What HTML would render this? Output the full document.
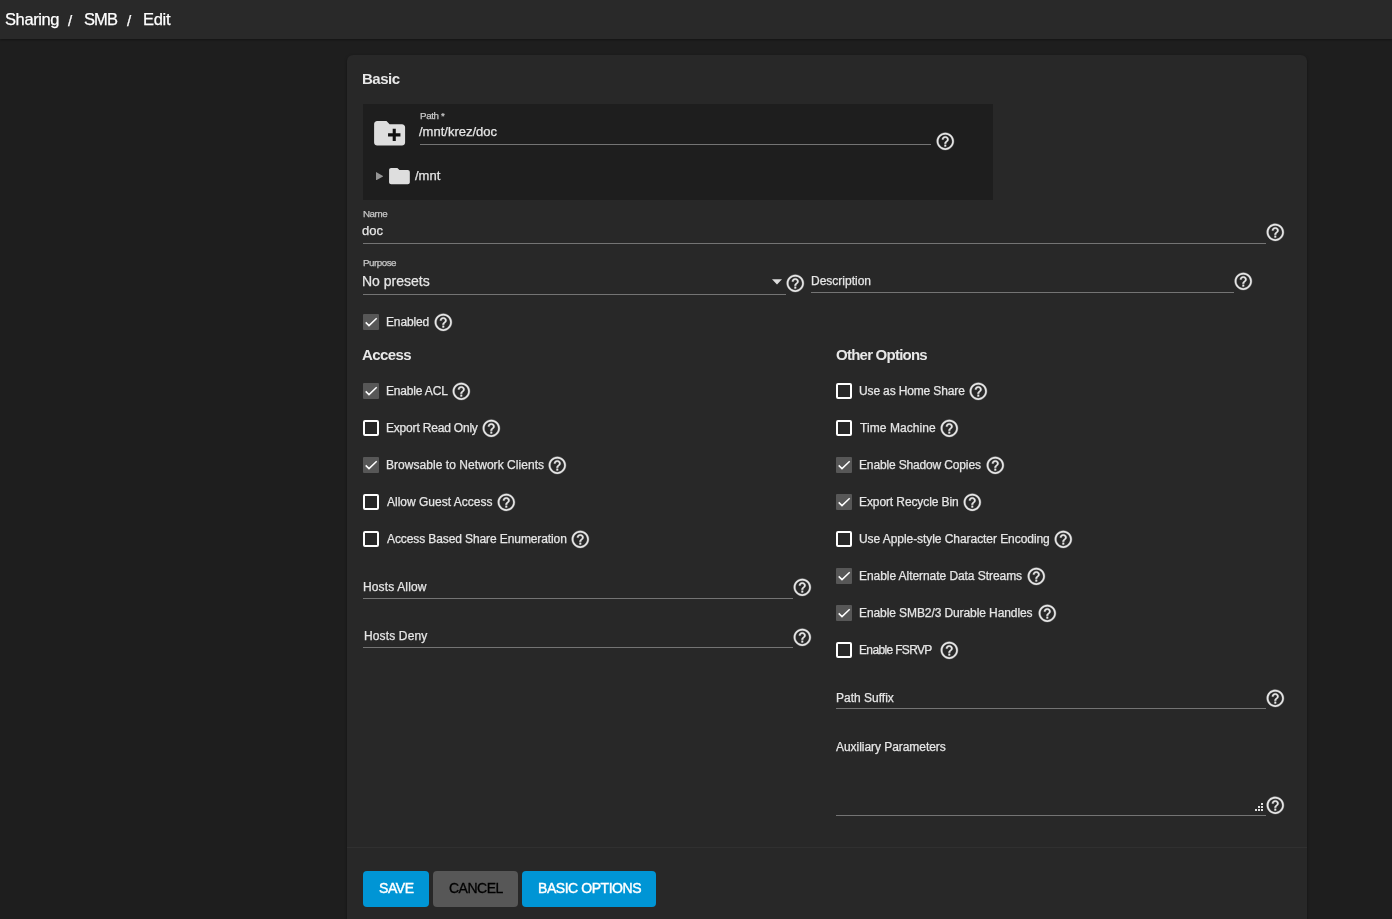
<!DOCTYPE html>
<html><head><meta charset="utf-8"><style>
html,body{margin:0;padding:0;}
body{width:1392px;height:919px;overflow:hidden;background:#1e1e1e;position:relative;font-family:"Liberation Sans", sans-serif;}
.t{position:absolute;white-space:nowrap;will-change:transform;-webkit-text-stroke:0.25px currentColor;}
.ln{position:absolute;height:1px;background:#747474;}
.cb{position:absolute;width:16px;height:16px;box-sizing:border-box;border-radius:2px;}
.cb.on{border-radius:1px;}
.cb.off{border:2px solid #ffffff;}
.cb.on{background:#575757;}
.cb svg{position:absolute;left:0;top:0;}
.hp{position:absolute;width:20.6px;height:20.6px;}
.btn{position:absolute;top:871px;height:36px;border-radius:4px;}
</style></head><body>

<div style="position:absolute;left:0;top:0;width:1392px;height:39px;background:#292929;box-shadow:0 1px 2px rgba(0,0,0,0.35);"></div>
<div style="position:absolute;left:347px;top:55px;width:960px;height:900px;background:#282828;border-radius:6px;box-shadow:0 1px 3px rgba(0,0,0,0.4);"></div>
<div style="position:absolute;left:363px;top:104px;width:630px;height:96px;background:#1e1e1e;"></div>
<div style="position:absolute;left:347px;top:847px;width:960px;height:1px;background:#303030;"></div>
<div class="btn" style="left:363px;width:66px;background:#0095d5;"></div>
<div class="btn" style="left:433px;width:85px;background:#575757;"></div>
<div class="btn" style="left:522px;width:134px;background:#0095d5;"></div>
<div class="ln" style="left:420px;top:144px;width:511px;"></div>
<div class="ln" style="left:363px;top:243px;width:903px;"></div>
<div class="ln" style="left:363px;top:294px;width:423px;"></div>
<div class="ln" style="left:811px;top:292px;width:423px;"></div>
<div class="ln" style="left:363px;top:598px;width:430px;"></div>
<div class="ln" style="left:363px;top:647px;width:430px;"></div>
<div class="ln" style="left:836px;top:708px;width:430px;"></div>
<div class="ln" style="left:836px;top:815px;width:430px;"></div>
<svg style="position:absolute;left:371px;top:114.7px;" width="37.2" height="36.7" viewBox="0 0 24 24" preserveAspectRatio="none"><path d="M20 6h-8l-2-2H4c-1.11 0-1.99.89-1.99 2L2 18c0 1.11.89 2 2 2h16c1.11 0 2-.89 2-2V8c0-1.11-.89-2-2-2z" fill="#dedede"/><path d="M19 14h-3v3h-2v-3h-3v-2h3V9h2v3h3v2z" fill="#111111"/></svg>
<svg style="position:absolute;left:375.8px;top:171.8px;" width="7.4" height="8.4" viewBox="0 0 7.4 8.4"><path d="M0 0 L7.4 4.2 L0 8.4 Z" fill="#959595"/></svg>
<svg style="position:absolute;left:387.1px;top:163.7px;" width="24.9" height="24.4" viewBox="0 0 24 24" preserveAspectRatio="none"><path d="M10 4H4c-1.1 0-1.99.9-1.99 2L2 18c0 1.1.9 2 2 2h16c1.1 0 2-.9 2-2V8c0-1.1-.9-2-2-2h-8l-2-2z" fill="#dedede"/></svg>
<svg style="position:absolute;left:771px;top:278.5px;" width="12" height="6" viewBox="0 0 12 6"><path d="M1 0.3 L11 0.3 L6 5.5 Z" fill="#dddddd"/></svg>
<svg style="position:absolute;left:1255px;top:803px;" width="10" height="9"><rect x="6" y="0" width="2" height="2" fill="#e0e0e0"/><rect x="3" y="3" width="2" height="2" fill="#e0e0e0"/><rect x="6" y="3" width="2" height="2" fill="#e0e0e0"/><rect x="0" y="6" width="2" height="2" fill="#e0e0e0"/><rect x="3" y="6" width="2" height="2" fill="#e0e0e0"/><rect x="6" y="6" width="2" height="2" fill="#e0e0e0"/></svg>
<svg class="hp" style="left:934.80px;top:130.55px;" viewBox="0 0 24 24"><path d="M11 18h2v-2h-2v2zm1-16C6.48 2 2 6.48 2 12s4.48 10 10 10 10-4.48 10-10S17.52 2 12 2zm0 18c-4.41 0-8-3.59-8-8s3.59-8 8-8 8 3.59 8 8-3.59 8-8 8zm0-14c-2.21 0-4 1.79-4 4h2c0-1.1.9-2 2-2s2 .9 2 2c0 2-3 1.75-3 5h2c0-2.25 3-2.5 3-5 0-2.21-1.79-4-4-4z" fill="#e6e6e6" stroke="#e6e6e6" stroke-width="0.35"/></svg>
<svg class="hp" style="left:1265.40px;top:221.55px;" viewBox="0 0 24 24"><path d="M11 18h2v-2h-2v2zm1-16C6.48 2 2 6.48 2 12s4.48 10 10 10 10-4.48 10-10S17.52 2 12 2zm0 18c-4.41 0-8-3.59-8-8s3.59-8 8-8 8 3.59 8 8-3.59 8-8 8zm0-14c-2.21 0-4 1.79-4 4h2c0-1.1.9-2 2-2s2 .9 2 2c0 2-3 1.75-3 5h2c0-2.25 3-2.5 3-5 0-2.21-1.79-4-4-4z" fill="#e6e6e6" stroke="#e6e6e6" stroke-width="0.35"/></svg>
<svg class="hp" style="left:785.30px;top:272.55px;" viewBox="0 0 24 24"><path d="M11 18h2v-2h-2v2zm1-16C6.48 2 2 6.48 2 12s4.48 10 10 10 10-4.48 10-10S17.52 2 12 2zm0 18c-4.41 0-8-3.59-8-8s3.59-8 8-8 8 3.59 8 8-3.59 8-8 8zm0-14c-2.21 0-4 1.79-4 4h2c0-1.1.9-2 2-2s2 .9 2 2c0 2-3 1.75-3 5h2c0-2.25 3-2.5 3-5 0-2.21-1.79-4-4-4z" fill="#e6e6e6" stroke="#e6e6e6" stroke-width="0.35"/></svg>
<svg class="hp" style="left:1233.30px;top:270.55px;" viewBox="0 0 24 24"><path d="M11 18h2v-2h-2v2zm1-16C6.48 2 2 6.48 2 12s4.48 10 10 10 10-4.48 10-10S17.52 2 12 2zm0 18c-4.41 0-8-3.59-8-8s3.59-8 8-8 8 3.59 8 8-3.59 8-8 8zm0-14c-2.21 0-4 1.79-4 4h2c0-1.1.9-2 2-2s2 .9 2 2c0 2-3 1.75-3 5h2c0-2.25 3-2.5 3-5 0-2.21-1.79-4-4-4z" fill="#e6e6e6" stroke="#e6e6e6" stroke-width="0.35"/></svg>
<svg class="hp" style="left:433.20px;top:311.55px;" viewBox="0 0 24 24"><path d="M11 18h2v-2h-2v2zm1-16C6.48 2 2 6.48 2 12s4.48 10 10 10 10-4.48 10-10S17.52 2 12 2zm0 18c-4.41 0-8-3.59-8-8s3.59-8 8-8 8 3.59 8 8-3.59 8-8 8zm0-14c-2.21 0-4 1.79-4 4h2c0-1.1.9-2 2-2s2 .9 2 2c0 2-3 1.75-3 5h2c0-2.25 3-2.5 3-5 0-2.21-1.79-4-4-4z" fill="#e6e6e6" stroke="#e6e6e6" stroke-width="0.35"/></svg>
<svg class="hp" style="left:792.20px;top:576.75px;" viewBox="0 0 24 24"><path d="M11 18h2v-2h-2v2zm1-16C6.48 2 2 6.48 2 12s4.48 10 10 10 10-4.48 10-10S17.52 2 12 2zm0 18c-4.41 0-8-3.59-8-8s3.59-8 8-8 8 3.59 8 8-3.59 8-8 8zm0-14c-2.21 0-4 1.79-4 4h2c0-1.1.9-2 2-2s2 .9 2 2c0 2-3 1.75-3 5h2c0-2.25 3-2.5 3-5 0-2.21-1.79-4-4-4z" fill="#e6e6e6" stroke="#e6e6e6" stroke-width="0.35"/></svg>
<svg class="hp" style="left:792.20px;top:626.55px;" viewBox="0 0 24 24"><path d="M11 18h2v-2h-2v2zm1-16C6.48 2 2 6.48 2 12s4.48 10 10 10 10-4.48 10-10S17.52 2 12 2zm0 18c-4.41 0-8-3.59-8-8s3.59-8 8-8 8 3.59 8 8-3.59 8-8 8zm0-14c-2.21 0-4 1.79-4 4h2c0-1.1.9-2 2-2s2 .9 2 2c0 2-3 1.75-3 5h2c0-2.25 3-2.5 3-5 0-2.21-1.79-4-4-4z" fill="#e6e6e6" stroke="#e6e6e6" stroke-width="0.35"/></svg>
<svg class="hp" style="left:1265.40px;top:687.55px;" viewBox="0 0 24 24"><path d="M11 18h2v-2h-2v2zm1-16C6.48 2 2 6.48 2 12s4.48 10 10 10 10-4.48 10-10S17.52 2 12 2zm0 18c-4.41 0-8-3.59-8-8s3.59-8 8-8 8 3.59 8 8-3.59 8-8 8zm0-14c-2.21 0-4 1.79-4 4h2c0-1.1.9-2 2-2s2 .9 2 2c0 2-3 1.75-3 5h2c0-2.25 3-2.5 3-5 0-2.21-1.79-4-4-4z" fill="#e6e6e6" stroke="#e6e6e6" stroke-width="0.35"/></svg>
<svg class="hp" style="left:1265.40px;top:794.55px;" viewBox="0 0 24 24"><path d="M11 18h2v-2h-2v2zm1-16C6.48 2 2 6.48 2 12s4.48 10 10 10 10-4.48 10-10S17.52 2 12 2zm0 18c-4.41 0-8-3.59-8-8s3.59-8 8-8 8 3.59 8 8-3.59 8-8 8zm0-14c-2.21 0-4 1.79-4 4h2c0-1.1.9-2 2-2s2 .9 2 2c0 2-3 1.75-3 5h2c0-2.25 3-2.5 3-5 0-2.21-1.79-4-4-4z" fill="#e6e6e6" stroke="#e6e6e6" stroke-width="0.35"/></svg>
<svg class="hp" style="left:451.30px;top:380.55px;" viewBox="0 0 24 24"><path d="M11 18h2v-2h-2v2zm1-16C6.48 2 2 6.48 2 12s4.48 10 10 10 10-4.48 10-10S17.52 2 12 2zm0 18c-4.41 0-8-3.59-8-8s3.59-8 8-8 8 3.59 8 8-3.59 8-8 8zm0-14c-2.21 0-4 1.79-4 4h2c0-1.1.9-2 2-2s2 .9 2 2c0 2-3 1.75-3 5h2c0-2.25 3-2.5 3-5 0-2.21-1.79-4-4-4z" fill="#e6e6e6" stroke="#e6e6e6" stroke-width="0.35"/></svg>
<svg class="hp" style="left:481.40px;top:417.55px;" viewBox="0 0 24 24"><path d="M11 18h2v-2h-2v2zm1-16C6.48 2 2 6.48 2 12s4.48 10 10 10 10-4.48 10-10S17.52 2 12 2zm0 18c-4.41 0-8-3.59-8-8s3.59-8 8-8 8 3.59 8 8-3.59 8-8 8zm0-14c-2.21 0-4 1.79-4 4h2c0-1.1.9-2 2-2s2 .9 2 2c0 2-3 1.75-3 5h2c0-2.25 3-2.5 3-5 0-2.21-1.79-4-4-4z" fill="#e6e6e6" stroke="#e6e6e6" stroke-width="0.35"/></svg>
<svg class="hp" style="left:547.40px;top:454.55px;" viewBox="0 0 24 24"><path d="M11 18h2v-2h-2v2zm1-16C6.48 2 2 6.48 2 12s4.48 10 10 10 10-4.48 10-10S17.52 2 12 2zm0 18c-4.41 0-8-3.59-8-8s3.59-8 8-8 8 3.59 8 8-3.59 8-8 8zm0-14c-2.21 0-4 1.79-4 4h2c0-1.1.9-2 2-2s2 .9 2 2c0 2-3 1.75-3 5h2c0-2.25 3-2.5 3-5 0-2.21-1.79-4-4-4z" fill="#e6e6e6" stroke="#e6e6e6" stroke-width="0.35"/></svg>
<svg class="hp" style="left:496.20px;top:491.55px;" viewBox="0 0 24 24"><path d="M11 18h2v-2h-2v2zm1-16C6.48 2 2 6.48 2 12s4.48 10 10 10 10-4.48 10-10S17.52 2 12 2zm0 18c-4.41 0-8-3.59-8-8s3.59-8 8-8 8 3.59 8 8-3.59 8-8 8zm0-14c-2.21 0-4 1.79-4 4h2c0-1.1.9-2 2-2s2 .9 2 2c0 2-3 1.75-3 5h2c0-2.25 3-2.5 3-5 0-2.21-1.79-4-4-4z" fill="#e6e6e6" stroke="#e6e6e6" stroke-width="0.35"/></svg>
<svg class="hp" style="left:569.80px;top:528.55px;" viewBox="0 0 24 24"><path d="M11 18h2v-2h-2v2zm1-16C6.48 2 2 6.48 2 12s4.48 10 10 10 10-4.48 10-10S17.52 2 12 2zm0 18c-4.41 0-8-3.59-8-8s3.59-8 8-8 8 3.59 8 8-3.59 8-8 8zm0-14c-2.21 0-4 1.79-4 4h2c0-1.1.9-2 2-2s2 .9 2 2c0 2-3 1.75-3 5h2c0-2.25 3-2.5 3-5 0-2.21-1.79-4-4-4z" fill="#e6e6e6" stroke="#e6e6e6" stroke-width="0.35"/></svg>
<svg class="hp" style="left:968.20px;top:380.55px;" viewBox="0 0 24 24"><path d="M11 18h2v-2h-2v2zm1-16C6.48 2 2 6.48 2 12s4.48 10 10 10 10-4.48 10-10S17.52 2 12 2zm0 18c-4.41 0-8-3.59-8-8s3.59-8 8-8 8 3.59 8 8-3.59 8-8 8zm0-14c-2.21 0-4 1.79-4 4h2c0-1.1.9-2 2-2s2 .9 2 2c0 2-3 1.75-3 5h2c0-2.25 3-2.5 3-5 0-2.21-1.79-4-4-4z" fill="#e6e6e6" stroke="#e6e6e6" stroke-width="0.35"/></svg>
<svg class="hp" style="left:939.30px;top:417.55px;" viewBox="0 0 24 24"><path d="M11 18h2v-2h-2v2zm1-16C6.48 2 2 6.48 2 12s4.48 10 10 10 10-4.48 10-10S17.52 2 12 2zm0 18c-4.41 0-8-3.59-8-8s3.59-8 8-8 8 3.59 8 8-3.59 8-8 8zm0-14c-2.21 0-4 1.79-4 4h2c0-1.1.9-2 2-2s2 .9 2 2c0 2-3 1.75-3 5h2c0-2.25 3-2.5 3-5 0-2.21-1.79-4-4-4z" fill="#e6e6e6" stroke="#e6e6e6" stroke-width="0.35"/></svg>
<svg class="hp" style="left:985.10px;top:454.55px;" viewBox="0 0 24 24"><path d="M11 18h2v-2h-2v2zm1-16C6.48 2 2 6.48 2 12s4.48 10 10 10 10-4.48 10-10S17.52 2 12 2zm0 18c-4.41 0-8-3.59-8-8s3.59-8 8-8 8 3.59 8 8-3.59 8-8 8zm0-14c-2.21 0-4 1.79-4 4h2c0-1.1.9-2 2-2s2 .9 2 2c0 2-3 1.75-3 5h2c0-2.25 3-2.5 3-5 0-2.21-1.79-4-4-4z" fill="#e6e6e6" stroke="#e6e6e6" stroke-width="0.35"/></svg>
<svg class="hp" style="left:962.10px;top:491.55px;" viewBox="0 0 24 24"><path d="M11 18h2v-2h-2v2zm1-16C6.48 2 2 6.48 2 12s4.48 10 10 10 10-4.48 10-10S17.52 2 12 2zm0 18c-4.41 0-8-3.59-8-8s3.59-8 8-8 8 3.59 8 8-3.59 8-8 8zm0-14c-2.21 0-4 1.79-4 4h2c0-1.1.9-2 2-2s2 .9 2 2c0 2-3 1.75-3 5h2c0-2.25 3-2.5 3-5 0-2.21-1.79-4-4-4z" fill="#e6e6e6" stroke="#e6e6e6" stroke-width="0.35"/></svg>
<svg class="hp" style="left:1053.10px;top:528.55px;" viewBox="0 0 24 24"><path d="M11 18h2v-2h-2v2zm1-16C6.48 2 2 6.48 2 12s4.48 10 10 10 10-4.48 10-10S17.52 2 12 2zm0 18c-4.41 0-8-3.59-8-8s3.59-8 8-8 8 3.59 8 8-3.59 8-8 8zm0-14c-2.21 0-4 1.79-4 4h2c0-1.1.9-2 2-2s2 .9 2 2c0 2-3 1.75-3 5h2c0-2.25 3-2.5 3-5 0-2.21-1.79-4-4-4z" fill="#e6e6e6" stroke="#e6e6e6" stroke-width="0.35"/></svg>
<svg class="hp" style="left:1026.20px;top:565.55px;" viewBox="0 0 24 24"><path d="M11 18h2v-2h-2v2zm1-16C6.48 2 2 6.48 2 12s4.48 10 10 10 10-4.48 10-10S17.52 2 12 2zm0 18c-4.41 0-8-3.59-8-8s3.59-8 8-8 8 3.59 8 8-3.59 8-8 8zm0-14c-2.21 0-4 1.79-4 4h2c0-1.1.9-2 2-2s2 .9 2 2c0 2-3 1.75-3 5h2c0-2.25 3-2.5 3-5 0-2.21-1.79-4-4-4z" fill="#e6e6e6" stroke="#e6e6e6" stroke-width="0.35"/></svg>
<svg class="hp" style="left:1036.60px;top:602.55px;" viewBox="0 0 24 24"><path d="M11 18h2v-2h-2v2zm1-16C6.48 2 2 6.48 2 12s4.48 10 10 10 10-4.48 10-10S17.52 2 12 2zm0 18c-4.41 0-8-3.59-8-8s3.59-8 8-8 8 3.59 8 8-3.59 8-8 8zm0-14c-2.21 0-4 1.79-4 4h2c0-1.1.9-2 2-2s2 .9 2 2c0 2-3 1.75-3 5h2c0-2.25 3-2.5 3-5 0-2.21-1.79-4-4-4z" fill="#e6e6e6" stroke="#e6e6e6" stroke-width="0.35"/></svg>
<svg class="hp" style="left:939.00px;top:639.55px;" viewBox="0 0 24 24"><path d="M11 18h2v-2h-2v2zm1-16C6.48 2 2 6.48 2 12s4.48 10 10 10 10-4.48 10-10S17.52 2 12 2zm0 18c-4.41 0-8-3.59-8-8s3.59-8 8-8 8 3.59 8 8-3.59 8-8 8zm0-14c-2.21 0-4 1.79-4 4h2c0-1.1.9-2 2-2s2 .9 2 2c0 2-3 1.75-3 5h2c0-2.25 3-2.5 3-5 0-2.21-1.79-4-4-4z" fill="#e6e6e6" stroke="#e6e6e6" stroke-width="0.35"/></svg>
<div class="cb on" style="left:363px;top:314px;"><svg width="16" height="16" viewBox="0 0 16 16"><polyline points="2.7,8.4 6,11.6 13.7,4.3" fill="none" stroke="#ffffff" stroke-width="1.5"/></svg></div>
<div class="cb on" style="left:363px;top:383px;"><svg width="16" height="16" viewBox="0 0 16 16"><polyline points="2.7,8.4 6,11.6 13.7,4.3" fill="none" stroke="#ffffff" stroke-width="1.5"/></svg></div>
<div class="cb off" style="left:363px;top:420px;"></div>
<div class="cb on" style="left:363px;top:457px;"><svg width="16" height="16" viewBox="0 0 16 16"><polyline points="2.7,8.4 6,11.6 13.7,4.3" fill="none" stroke="#ffffff" stroke-width="1.5"/></svg></div>
<div class="cb off" style="left:363px;top:494px;"></div>
<div class="cb off" style="left:363px;top:531px;"></div>
<div class="cb off" style="left:836px;top:383px;"></div>
<div class="cb off" style="left:836px;top:420px;"></div>
<div class="cb on" style="left:836px;top:457px;"><svg width="16" height="16" viewBox="0 0 16 16"><polyline points="2.7,8.4 6,11.6 13.7,4.3" fill="none" stroke="#ffffff" stroke-width="1.5"/></svg></div>
<div class="cb on" style="left:836px;top:494px;"><svg width="16" height="16" viewBox="0 0 16 16"><polyline points="2.7,8.4 6,11.6 13.7,4.3" fill="none" stroke="#ffffff" stroke-width="1.5"/></svg></div>
<div class="cb off" style="left:836px;top:531px;"></div>
<div class="cb on" style="left:836px;top:568px;"><svg width="16" height="16" viewBox="0 0 16 16"><polyline points="2.7,8.4 6,11.6 13.7,4.3" fill="none" stroke="#ffffff" stroke-width="1.5"/></svg></div>
<div class="cb on" style="left:836px;top:605px;"><svg width="16" height="16" viewBox="0 0 16 16"><polyline points="2.7,8.4 6,11.6 13.7,4.3" fill="none" stroke="#ffffff" stroke-width="1.5"/></svg></div>
<div class="cb off" style="left:836px;top:642px;"></div>
<div class="t" style="left:5.00px;top:11.03px;font-size:16.50px;line-height:16.50px;font-weight:400;color:#ffffff;letter-spacing:-0.40px">Sharing</div>
<div class="t" style="left:68.30px;top:12.90px;font-size:15.00px;line-height:15.00px;font-weight:400;color:#ffffff">/</div>
<div class="t" style="left:84.10px;top:11.03px;font-size:16.50px;line-height:16.50px;font-weight:400;color:#ffffff;letter-spacing:-0.90px">SMB</div>
<div class="t" style="left:126.80px;top:12.90px;font-size:15.00px;line-height:15.00px;font-weight:400;color:#ffffff">/</div>
<div class="t" style="left:143.10px;top:11.03px;font-size:16.50px;line-height:16.50px;font-weight:400;color:#ffffff;letter-spacing:-0.30px">Edit</div>
<div class="t" style="left:362.00px;top:71.30px;font-size:15.00px;line-height:15.00px;font-weight:700;color:#e8e8e8;letter-spacing:-0.50px;-webkit-text-stroke:0">Basic</div>
<div class="t" style="left:420.10px;top:110.70px;font-size:9.80px;line-height:9.80px;font-weight:400;color:#c7c7c7;letter-spacing:-0.40px">Path *</div>
<div class="t" style="left:419.20px;top:124.79px;font-size:13.00px;line-height:13.00px;font-weight:400;color:#e6e6e6">/mnt/krez/doc</div>
<div class="t" style="left:414.60px;top:168.99px;font-size:13.00px;line-height:13.00px;font-weight:400;color:#e6e6e6">/mnt</div>
<div class="t" style="left:362.80px;top:209.30px;font-size:9.80px;line-height:9.80px;font-weight:400;color:#c7c7c7;letter-spacing:-0.50px">Name</div>
<div class="t" style="left:362.10px;top:223.69px;font-size:13.00px;line-height:13.00px;font-weight:400;color:#e6e6e6">doc</div>
<div class="t" style="left:362.80px;top:258.40px;font-size:9.80px;line-height:9.80px;font-weight:400;color:#c7c7c7;letter-spacing:-0.50px">Purpose</div>
<div class="t" style="left:362.00px;top:273.75px;font-size:14.00px;line-height:14.00px;font-weight:400;color:#e6e6e6">No presets</div>
<div class="t" style="left:811.20px;top:274.94px;font-size:12.00px;line-height:12.00px;font-weight:400;color:#e6e6e6">Description</div>
<div class="t" style="left:385.80px;top:315.84px;font-size:12.00px;line-height:12.00px;font-weight:400;color:#e6e6e6;letter-spacing:-0.13px">Enabled</div>
<div class="t" style="left:362.10px;top:346.80px;font-size:15.00px;line-height:15.00px;font-weight:700;color:#e8e8e8;letter-spacing:-0.60px;-webkit-text-stroke:0">Access</div>
<div class="t" style="left:836.10px;top:346.80px;font-size:15.00px;line-height:15.00px;font-weight:700;color:#e8e8e8;letter-spacing:-0.76px;-webkit-text-stroke:0">Other Options</div>
<div class="t" style="left:385.80px;top:384.84px;font-size:12.00px;line-height:12.00px;font-weight:400;color:#e6e6e6;letter-spacing:-0.17px">Enable ACL</div>
<div class="t" style="left:385.80px;top:421.84px;font-size:12.00px;line-height:12.00px;font-weight:400;color:#e6e6e6;letter-spacing:-0.19px">Export Read Only</div>
<div class="t" style="left:385.80px;top:458.84px;font-size:12.00px;line-height:12.00px;font-weight:400;color:#e6e6e6;letter-spacing:0.05px">Browsable to Network Clients</div>
<div class="t" style="left:386.80px;top:495.84px;font-size:12.00px;line-height:12.00px;font-weight:400;color:#e6e6e6">Allow Guest Access</div>
<div class="t" style="left:386.80px;top:532.84px;font-size:12.00px;line-height:12.00px;font-weight:400;color:#e6e6e6;letter-spacing:-0.10px">Access Based Share Enumeration</div>
<div class="t" style="left:858.90px;top:384.84px;font-size:12.00px;line-height:12.00px;font-weight:400;color:#e6e6e6;letter-spacing:-0.14px">Use as Home Share</div>
<div class="t" style="left:859.90px;top:421.84px;font-size:12.00px;line-height:12.00px;font-weight:400;color:#e6e6e6;letter-spacing:0.07px">Time Machine</div>
<div class="t" style="left:858.90px;top:458.84px;font-size:12.00px;line-height:12.00px;font-weight:400;color:#e6e6e6;letter-spacing:-0.15px">Enable Shadow Copies</div>
<div class="t" style="left:858.90px;top:495.84px;font-size:12.00px;line-height:12.00px;font-weight:400;color:#e6e6e6;letter-spacing:-0.10px">Export Recycle Bin</div>
<div class="t" style="left:858.90px;top:532.84px;font-size:12.00px;line-height:12.00px;font-weight:400;color:#e6e6e6;letter-spacing:-0.06px">Use Apple-style Character Encoding</div>
<div class="t" style="left:858.90px;top:569.84px;font-size:12.00px;line-height:12.00px;font-weight:400;color:#e6e6e6;letter-spacing:-0.06px">Enable Alternate Data Streams</div>
<div class="t" style="left:858.90px;top:606.84px;font-size:12.00px;line-height:12.00px;font-weight:400;color:#e6e6e6;letter-spacing:-0.09px">Enable SMB2/3 Durable Handles</div>
<div class="t" style="left:858.90px;top:643.84px;font-size:12.00px;line-height:12.00px;font-weight:400;color:#e6e6e6;letter-spacing:-0.65px">Enable FSRVP</div>
<div class="t" style="left:363.10px;top:580.84px;font-size:12.00px;line-height:12.00px;font-weight:400;color:#e6e6e6;letter-spacing:0.14px">Hosts Allow</div>
<div class="t" style="left:363.60px;top:629.84px;font-size:12.00px;line-height:12.00px;font-weight:400;color:#e6e6e6;letter-spacing:0.14px">Hosts Deny</div>
<div class="t" style="left:836.10px;top:691.84px;font-size:12.00px;line-height:12.00px;font-weight:400;color:#e6e6e6">Path Suffix</div>
<div class="t" style="left:836.20px;top:740.84px;font-size:12.00px;line-height:12.00px;font-weight:400;color:#e6e6e6;letter-spacing:-0.05px">Auxiliary Parameters</div>
<div class="t" style="left:378.80px;top:881.15px;font-size:14.00px;line-height:14.00px;font-weight:400;color:#ffffff;letter-spacing:-0.40px;-webkit-text-stroke:0.4px #ffffff">SAVE</div>
<div class="t" style="left:448.70px;top:881.15px;font-size:14.00px;line-height:14.00px;font-weight:400;color:#000000;letter-spacing:-0.50px;-webkit-text-stroke:0.3px #000000">CANCEL</div>
<div class="t" style="left:537.60px;top:881.15px;font-size:14.00px;line-height:14.00px;font-weight:400;color:#ffffff;letter-spacing:-0.45px;-webkit-text-stroke:0.4px #ffffff">BASIC OPTIONS</div>
</body></html>
